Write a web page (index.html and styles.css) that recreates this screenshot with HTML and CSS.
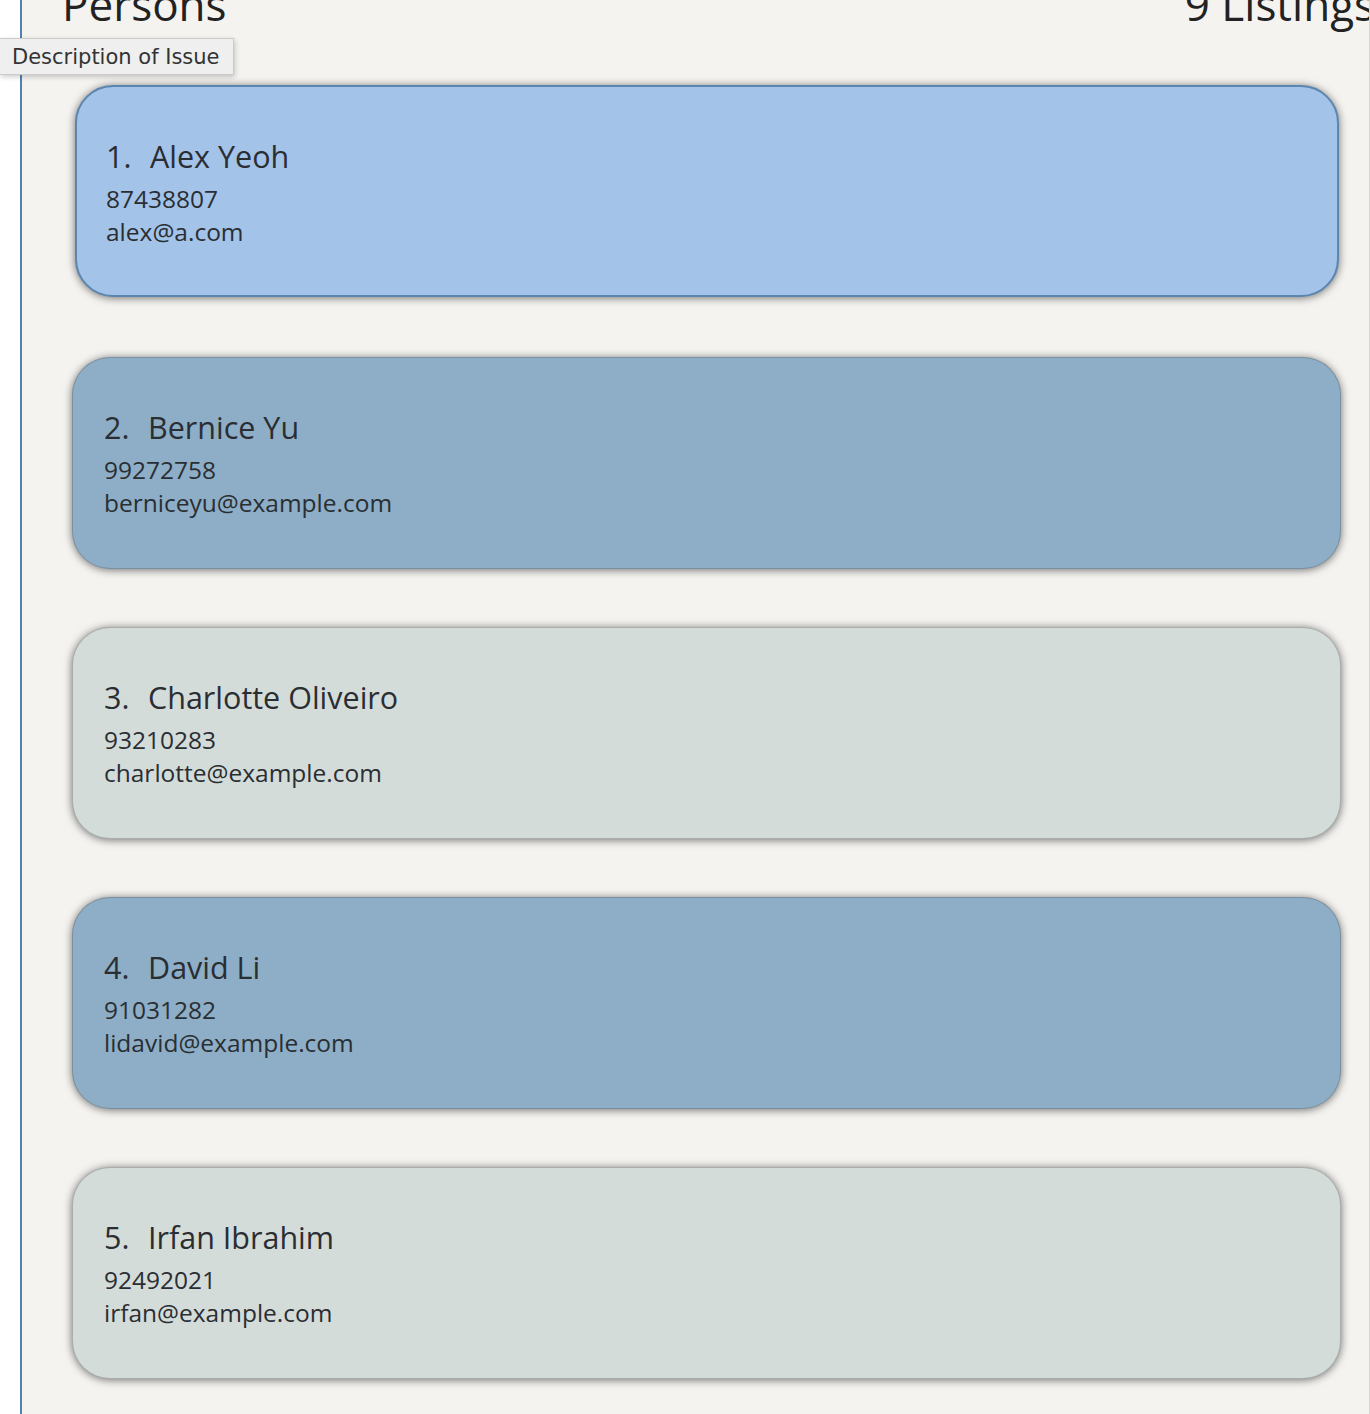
FILE: index.html
```html
<!DOCTYPE html>
<html>
<head>
<meta charset="utf-8">
<link rel="stylesheet" href="styles.css">
</head>
<body>
<div class="app">
  <div class="gutter"></div>
  <div class="panel">
    <div class="header">
      <span class="title">Persons</span>
      <span class="count">9 Listings</span>
    </div>
    <div class="list">
      <div class="card card-selected">
        <div class="name"><span class="idx">1.</span>Alex Yeoh</div>
        <div class="line">87438807</div>
        <div class="line">alex@a.com</div>
      </div>
      <div class="card card-dark">
        <div class="name"><span class="idx">2.</span>Bernice Yu</div>
        <div class="line">99272758</div>
        <div class="line">berniceyu@example.com</div>
      </div>
      <div class="card card-light">
        <div class="name"><span class="idx">3.</span>Charlotte Oliveiro</div>
        <div class="line">93210283</div>
        <div class="line">charlotte@example.com</div>
      </div>
      <div class="card card-dark">
        <div class="name"><span class="idx">4.</span>David Li</div>
        <div class="line">91031282</div>
        <div class="line">lidavid@example.com</div>
      </div>
      <div class="card card-light">
        <div class="name"><span class="idx">5.</span>Irfan Ibrahim</div>
        <div class="line">92492021</div>
        <div class="line">irfan@example.com</div>
      </div>
    </div>
  </div>
</div>
<div class="tooltip">Description of Issue</div>
</body>
</html>
```
FILE: styles.css
```css
html, body {
  margin: 0;
  padding: 0;
  width: 1370px;
  height: 1414px;
  overflow: hidden;
  background: #ffffff;
}

.app {
  display: flex;
  width: 1370px;
  height: 1414px;
}

.gutter {
  width: 20px;
  flex: none;
  background: #ffffff;
}

.panel {
  flex: 1;
  background: #f4f3f0;
  border-left: 2px solid #4f82b3;
  border-right: 1px solid #d6d6d4;
  display: flex;
  flex-direction: column;
  overflow: hidden;
  font-family: "Open Sans", "Noto Sans", sans-serif;
  color: #2a2e33;
}

.header {
  display: flex;
  justify-content: space-between;
  align-items: baseline;
  padding-left: 40px;
  margin-top: -24px;
  height: 56px;
  line-height: 56px;
  font-size: 44px;
  color: #222;
  white-space: nowrap;
}

.count {
  margin-right: -6px;
}

.list {
  display: flex;
  flex-direction: column;
  gap: 58px;
  padding: 53px 28px 0 50px;
}

.card {
  height: 212px;
  box-sizing: border-box;
  border-radius: 38px;
  padding: 48px 32px 0 31px;
  box-shadow: 0 1px 9px rgba(0, 0, 0, 0.55);
  border: 1px solid rgba(90, 90, 90, 0.35);
}

.card-selected {
  background: #a3c3e9;
  border: 2px solid #5b86b0;
  margin: 0 2px 2px 3px;
  padding-left: 29px;
}

.card-dark {
  background: #8daec6;
}

.card-light {
  background: #d4dcd9;
}

.name {
  font-size: 30.5px;
  line-height: 42px;
  margin-bottom: 5px;
}

.idx {
  display: inline-block;
  width: 44px;
}

.line {
  font-size: 24.5px;
  line-height: 33px;
}

.tooltip {
  position: absolute;
  left: 0;
  top: 38px;
  width: 234px;
  height: 37px;
  box-sizing: border-box;
  padding-left: 12px;
  background: #efefef;
  border: 1px solid #cbcbcb;
  border-left: none;
  box-shadow: 1px 2px 5px rgba(0, 0, 0, 0.2);
  font-family: "DejaVu Sans", "Liberation Sans", sans-serif;
  font-size: 21px;
  line-height: 36px;
  color: #333;
  white-space: nowrap;
}
```
